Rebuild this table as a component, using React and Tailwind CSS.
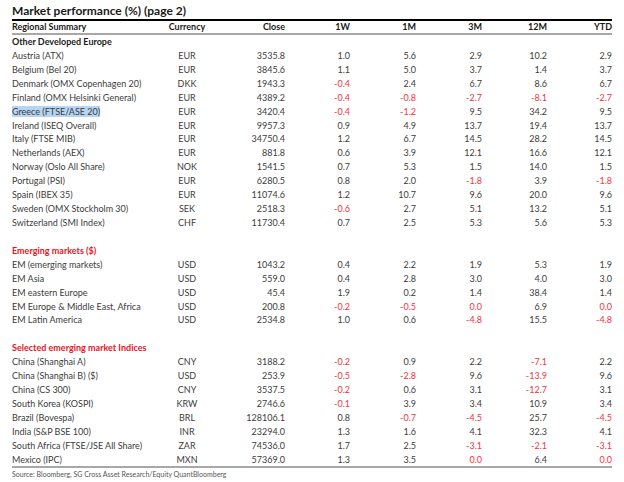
import React from 'react';

const sections = [
  {
    title: 'Other Developed Europe',
    red: false,
    rows: [
      ['Austria (ATX)', 'EUR', '3535.8', '1.0', '5.6', '2.9', '10.2', '2.9'],
      ['Belgium (Bel 20)', 'EUR', '3845.6', '1.1', '5.0', '3.7', '1.4', '3.7'],
      ['Denmark (OMX Copenhagen 20)', 'DKK', '1943.3', '-0.4', '2.4', '6.7', '8.6', '6.7'],
      ['Finland (OMX Helsinki General)', 'EUR', '4389.2', '-0.4', '-0.8', '-2.7', '-8.1', '-2.7'],
      ['Greece (FTSE/ASE 20)', 'EUR', '3420.4', '-0.4', '-1.2', '9.5', '34.2', '9.5'],
      ['Ireland (ISEQ Overall)', 'EUR', '9957.3', '0.9', '4.9', '13.7', '19.4', '13.7'],
      ['Italy (FTSE MIB)', 'EUR', '34750.4', '1.2', '6.7', '14.5', '28.2', '14.5'],
      ['Netherlands (AEX)', 'EUR', '881.8', '0.6', '3.9', '12.1', '16.6', '12.1'],
      ['Norway (Oslo All Share)', 'NOK', '1541.5', '0.7', '5.3', '1.5', '14.0', '1.5'],
      ['Portugal (PSI)', 'EUR', '6280.5', '0.8', '2.0', '-1.8', '3.9', '-1.8'],
      ['Spain (IBEX 35)', 'EUR', '11074.6', '1.2', '10.7', '9.6', '20.0', '9.6'],
      ['Sweden (OMX Stockholm 30)', 'SEK', '2518.3', '-0.6', '2.7', '5.1', '13.2', '5.1'],
      ['Switzerland (SMI Index)', 'CHF', '11730.4', '0.7', '2.5', '5.3', '5.6', '5.3'],
    ],
  },
  {
    title: 'Emerging markets ($)',
    red: true,
    rows: [
      ['EM (emerging markets)', 'USD', '1043.2', '0.4', '2.2', '1.9', '5.3', '1.9'],
      ['EM Asia', 'USD', '559.0', '0.4', '2.8', '3.0', '4.0', '3.0'],
      ['EM eastern Europe', 'USD', '45.4', '1.9', '0.2', '1.4', '38.4', '1.4'],
      ['EM Europe & Middle East, Africa', 'USD', '200.8', '-0.2', '-0.5', '0.0', '6.9', '0.0'],
      ['EM Latin America', 'USD', '2534.8', '1.0', '0.6', '-4.8', '15.5', '-4.8'],
    ],
  },
  {
    title: 'Selected emerging market Indices',
    red: true,
    rows: [
      ['China (Shanghai A)', 'CNY', '3188.2', '-0.2', '0.9', '2.2', '-7.1', '2.2'],
      ['China (Shanghai B) ($)', 'USD', '253.9', '-0.5', '-2.8', '9.6', '-13.9', '9.6'],
      ['China (CS 300)', 'CNY', '3537.5', '-0.2', '0.6', '3.1', '-12.7', '3.1'],
      ['South Korea (KOSPI)', 'KRW', '2746.6', '-0.1', '3.9', '3.4', '10.9', '3.4'],
      ['Brazil (Bovespa)', 'BRL', '128106.1', '0.8', '-0.7', '-4.5', '25.7', '-4.5'],
      ['India (S&P BSE 100)', 'INR', '23294.0', '1.3', '1.6', '4.1', '32.3', '4.1'],
      ['South Africa (FTSE/JSE All Share)', 'ZAR', '74536.0', '1.7', '2.5', '-3.1', '-2.1', '-3.1'],
      ['Mexico (IPC)', 'MXN', '57369.0', '1.3', '3.5', '0.0', '6.4', '0.0'],
    ],
  },
];

const cols = 'grid grid-cols-[153px_44px_76px_65px_66px_66px_65px_65px]';

const Row = ({ row }) => {
  const [name, cur, close, ...perf] = row;
  return (
    <div className={`${cols} h-[13.93px] leading-[13.93px] items-center text-[#3c3c3c]`}>
      <div className="whitespace-nowrap">
        {name === 'Greece (FTSE/ASE 20)' ? <span className="bg-[#b5d5f2]">{name}</span> : name}
      </div>
      <div className="text-center">{cur}</div>
      <div className="text-right">{close}</div>
      {perf.map((v, i) => (
        <div key={i} className={`text-right ${parseFloat(v) <= 0 ? 'text-[#f2343f]' : ''}`}>
          {v}
        </div>
      ))}
    </div>
  );
};

export default function App() {
  return (
    <div className="w-[624px] h-[482px] bg-white pt-[3px] pl-[12px] font-['Lato',sans-serif] text-[9px]">
      <div className="w-[600px]">
        <div className="text-[12px] font-bold leading-[16px] text-[#1a1a1a]">Market performance (%) (page 2)</div>
        <div className="border-t-2 border-black" />
        <div className={`${cols} h-[12px] leading-[12px] font-bold text-[#1a1a1a]`}>
          <div>Regional Summary</div>
          <div className="text-center">Currency</div>
          <div className="text-right">Close</div>
          <div className="text-right">1W</div>
          <div className="text-right">1M</div>
          <div className="text-right">3M</div>
          <div className="text-right">12M</div>
          <div className="text-right">YTD</div>
        </div>
        <div className="border-t-2 border-[#a8a8a8]" />
        {sections.map((s, i) => (
          <div key={s.title}>
            {i > 0 && <div className="h-[13.93px]" />}
            <div
              className={`h-[13.93px] leading-[13.93px] font-bold ${s.red ? 'text-[#e8141c]' : 'text-[#1a1a1a]'}`}
            >
              {s.title}
            </div>
            {s.rows.map((r) => (
              <Row key={r[0]} row={r} />
            ))}
          </div>
        ))}
        <div className="mt-[-1px] border-t-2 border-[#a8a8a8]" />
        <div className="text-[7px] leading-[10px] text-[#555] pt-[1px]">
          Source: Bloomberg, SG Cross Asset Research/Equity QuantBloomberg
        </div>
      </div>
    </div>
  );
}
